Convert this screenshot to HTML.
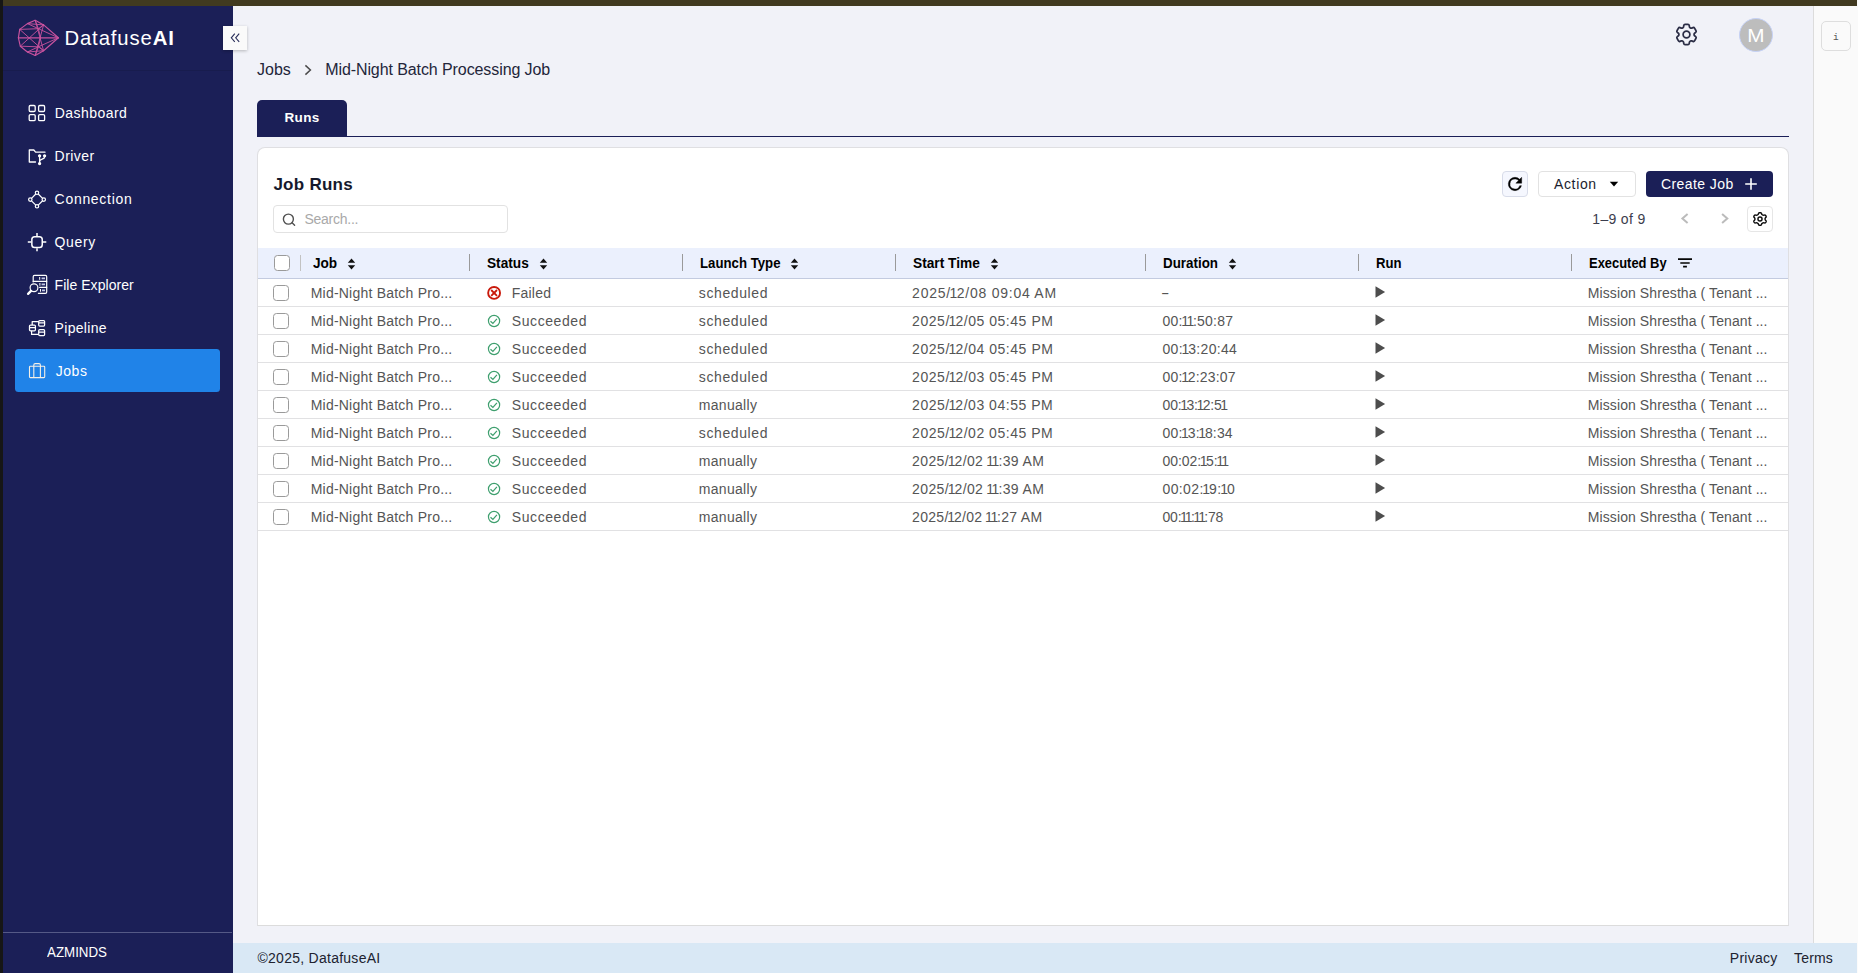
<!DOCTYPE html>
<html lang="en">
<head>
<meta charset="utf-8">
<title>DatafuseAI - Jobs</title>
<style>
*{box-sizing:border-box;margin:0;padding:0}
html,body{width:1858px;height:973px;overflow:hidden;background:#fbfbfb}
body{position:relative;font-family:"Liberation Sans",sans-serif;color:#1e2133;font-size:14px}
.abs{position:absolute}
#leftstrip{left:0;top:0;width:3px;height:973px;background:#161616}
#topstrip{left:3px;top:0;width:1854px;height:6px;background:#413a20}
#sidebar{left:3px;top:6px;width:230px;height:967px;background:#1b1f57;color:#fff}
#main{left:233px;top:6px;width:1580px;height:937px;background:#f1f2f8}
#rightpanel{left:1813px;top:6px;width:45px;height:937px;background:#fafafa;border-left:1px solid #dcdcdc}
#footer{left:233px;top:943px;width:1624px;height:30px;background:#d9e8f5}
.t{position:absolute;white-space:nowrap;line-height:1}
/* sidebar */
.nav{position:absolute;left:52px;font-size:14px;color:#fff;white-space:nowrap;line-height:18px}
.ico{position:absolute;left:24px;width:20px;height:20px}
/* table */
.hd{position:absolute;top:248px;height:31px;left:258px;width:1530px;background:#ebf0fd;border-bottom:1px solid #c3cbe0}
.hl{position:absolute;top:255px;font-weight:bold;font-size:14.5px;color:#000;line-height:16px;white-space:nowrap;transform-origin:0 50%}
.sep{position:absolute;top:254px;width:1px;height:17px;background:#9a9a9a}
.row{position:absolute;left:258px;width:1530px;height:28px;border-bottom:1px solid #e1e1e3}
.c{position:absolute;top:1px;height:27px;line-height:27px;font-size:14px;color:#555;white-space:nowrap}
.o{margin:0 -1.4px}
.cb{position:absolute;width:16px;height:16px;border:1px solid #9a9a9a;border-radius:3.5px;background:#fff}
</style>
</head>
<body>
<div id="leftstrip" class="abs"></div>
<div id="topstrip" class="abs"></div>
<div id="sidebar" class="abs"></div>
<div id="main" class="abs"></div>
<div id="rightpanel" class="abs"></div>
<div id="footer" class="abs"></div>
<!--SIDEBAR-->
<!-- logo -->
<svg class="abs" style="left:16px;top:18px" width="46" height="40" viewBox="16 18 46 40" fill="none" stroke="#c9529f" stroke-width="0.9" stroke-linejoin="round" stroke-linecap="round">
<path d="M35.2 20.3 L43.6 24.9 L58.4 37.8 L43.6 50.7 L35.2 55.5 L27.4 52 L20.3 46.2 L18.4 37.8 L19.7 29.4 L27.4 23.6 Z" stroke-width="1.150"/>
<path d="M18.4 37.8 H58.4" stroke-width="1.3"/>
<path d="M19.7 29.4 L43.6 50.7 M20.3 46.2 L43.6 24.9"/>
<path d="M35.2 20.3 L38.4 28.7 L40.6 37.8 L38.4 46.8 L35.2 55.5"/>
<path d="M58.4 37.8 L38.4 28.7 L27.4 23.6 M58.4 37.8 L38.4 46.8 L27.4 52"/>
<path d="M19.7 29.4 L38.4 28.7 L43.6 24.9 M20.3 46.2 L38.4 46.8 L43.6 50.7"/>
<path d="M35.2 20.3 L43.6 50.7 M35.2 55.5 L43.6 24.9"/>
<path d="M27.4 23.6 L43.6 24.9 M27.4 52 L43.6 50.7"/>
</svg>
<div class="t" id="logotxt" style="left:64.4px;top:26px;font-size:20.3px;line-height:24px;color:#fff;letter-spacing:0.9px">Datafuse<b>AI</b></div>
<div class="abs" style="left:3px;top:70px;width:229px;height:1px;background:#181c4e"></div>
<!-- collapse button -->
<div class="abs" style="left:223px;top:26px;width:24px;height:24px;background:#fafafa;box-shadow:0 1px 3px rgba(0,0,0,.25)"></div>
<svg class="abs" style="left:229px;top:32px" width="12" height="12" viewBox="0 0 12 12" fill="none" stroke="#2a2e5a" stroke-width="1.1"><path d="M5.8 1.7 L2.3 5.800 L5.8 9.900 M10.200 1.700 L6.700 5.800 L10.200 9.900"/></svg>
<!-- active item -->
<div class="abs" style="left:15px;top:349px;width:205px;height:43px;background:#2083e8;border-radius:3.5px"></div>
<!-- nav icons -->
<svg class="abs" style="left:27px;top:103px" width="20" height="20" viewBox="27 103 20 20" fill="none" stroke="#fff" stroke-width="1.3"><rect x="29.2" y="105.5" width="6" height="6" rx="1.2"/><rect x="38.6" y="105.5" width="6" height="6" rx="1.2"/><rect x="29.2" y="114.6" width="6" height="6" rx="1.2"/><rect x="38.6" y="114.6" width="6" height="6" rx="1.2"/></svg>
<svg class="abs" style="left:27px;top:147px" width="21" height="20" viewBox="27 147 21 20" fill="none" stroke="#fff" stroke-width="1.3" stroke-linejoin="round" stroke-linecap="round"><path d="M35.5 162 H29.3 V150 H33.8 L35.6 152.2 H45"/><circle cx="39.6" cy="155.8" r="1" fill="#fff"/><circle cx="44.6" cy="155.8" r="1" fill="#fff"/><circle cx="39.6" cy="163.6" r="1" fill="#fff"/><path d="M39.6 157 V162.4 M44.6 157 C44.6 159.8 40 158.6 39.6 161.4"/></svg>
<svg class="abs" style="left:27px;top:189px" width="20" height="21" viewBox="27 189 20 21" fill="none" stroke="#fff" stroke-width="1.2"><circle cx="37" cy="192.8" r="1.7"/><circle cx="37" cy="206.3" r="1.7"/><circle cx="30.3" cy="199.6" r="1.7"/><circle cx="43.8" cy="199.6" r="1.7"/><path d="M35.8 194 L31.5 198.4 M38.2 194 L42.6 198.4 M31.5 200.8 L35.8 205.1 M42.6 200.8 L38.2 205.1"/></svg>
<svg class="abs" style="left:26px;top:231px" width="22" height="22" viewBox="26 231 22 22" fill="none" stroke="#fff" stroke-width="1.5"><rect x="31.85" y="236.65" width="10.4" height="10.8" rx="2.800"/><path d="M37 233 V236 M37 248.200 V251.200 M27.800 242 H31.200 M43 242 H46.300"/></svg>
<svg class="abs" style="left:26px;top:273px" width="23" height="23" viewBox="26 273 23 23" fill="none" stroke="#fff" stroke-width="1.2" stroke-linecap="round" stroke-linejoin="round"><path d="M33.2 282 V276.700 Q33.2 275.4 34.500 275.4 H45.400 Q46.700 275.400 46.700 276.700 V292 Q46.700 293.300 45.400 293.300 H38.400"/><path d="M33.2 281.300 H46.700 M39.600 287.300 H46.700"/><path d="M39.700 277.400 V279.400 M39.900 283.400 V285.300 M40.500 289.400 V291.300" stroke-width="1"/><path d="M41.600 278.400 H45 M41.600 284.400 H45 M42 290.400 H45" stroke-width="1.900" stroke="#c4c8e6" stroke-linecap="butt"/><circle cx="34" cy="287.700" r="3.900"/><path d="M31 290.900 L28.100 293.900" stroke-width="2.300"/></svg>
<svg class="abs" style="left:27px;top:318px" width="20" height="20" viewBox="27 318 20 20" fill="none" stroke="#fff" stroke-width="1.250" stroke-linejoin="round"><rect x="29.500" y="325.100" width="5.900" height="5.700" rx="1"/><rect x="38.700" y="320.500" width="5.900" height="5.500" rx="1"/><rect x="38.700" y="329.700" width="5.900" height="5.900" rx="1"/><path d="M32.200 325.100 V321.600 H38.700 M31.600 330.800 V334.400 H38.700"/><path d="M29.500 327.600 H35.400 M38.700 322.900 H44.600 M38.700 332.100 H44.600"/></svg>
<svg class="abs" style="left:27px;top:361px" width="20" height="19" viewBox="27 361 20 19" fill="none" stroke="#f4efe6" stroke-width="1.1" stroke-linejoin="round"><rect x="29.5" y="366.2" width="15.2" height="11.4" rx="0.8"/><path d="M33.8 377.6 V365 Q33.8 363.6 35.2 363.6 H39 Q40.4 363.6 40.4 365 V377.6"/></svg>
<!-- nav labels -->
<div class="nav" id="n1" style="left:54.8px;top:104px;letter-spacing:0.45px">Dashboard</div>
<div class="nav" id="n2" style="left:54.6px;top:147px;letter-spacing:0.46px">Driver</div>
<div class="nav" id="n3" style="left:54.6px;top:190px;letter-spacing:0.7px">Connection</div>
<div class="nav" id="n4" style="left:54.6px;top:233px;letter-spacing:0.62px">Query</div>
<div class="nav" id="n5" style="left:54.6px;top:276px;letter-spacing:0.04px">File Explorer</div>
<div class="nav" id="n6" style="left:54.6px;top:319px;letter-spacing:0.31px">Pipeline</div>
<div class="nav" id="n7" style="left:55.7px;top:362px;letter-spacing:0.57px">Jobs</div>
<!-- sidebar footer -->
<div class="abs" style="left:3px;top:932px;width:229px;height:1px;background:#555986"></div>
<div class="t" id="azm" style="left:46.5px;top:943.4px;font-size:15.5px;line-height:18px;color:#fff;transform:scaleX(.86);transform-origin:0 50%">AZMINDS</div>

<!--HEADER-->
<!-- top right gear -->
<svg class="abs" style="left:1673.100px;top:21.200px" width="27" height="27" viewBox="0 0 24 24" fill="none" stroke="#2b2d45" stroke-width="1.550" stroke-linecap="round" stroke-linejoin="round"><path d="M9.594 3.94c.09-.542.56-.94 1.11-.94h2.593c.55 0 1.02.398 1.11.94l.213 1.281c.063.374.313.686.645.87.074.04.147.083.22.127.325.196.72.257 1.075.124l1.217-.456a1.125 1.125 0 0 1 1.37.49l1.296 2.247a1.125 1.125 0 0 1-.26 1.431l-1.003.827c-.293.241-.438.613-.43.992a7.723 7.723 0 0 1 0 .255c-.008.378.137.75.43.991l1.004.827c.424.35.534.955.26 1.43l-1.298 2.247a1.125 1.125 0 0 1-1.369.491l-1.217-.456c-.355-.133-.75-.072-1.076.124a6.470 6.470 0 0 1-.22.128c-.331.183-.581.495-.644.869l-.213 1.281c-.09.543-.56.94-1.11.94h-2.594c-.55 0-1.019-.398-1.11-.94l-.213-1.281c-.062-.374-.312-.686-.644-.87a6.520 6.520 0 0 1-.22-.127c-.325-.196-.72-.257-1.076-.124l-1.217.456a1.125 1.125 0 0 1-1.369-.49l-1.297-2.247a1.125 1.125 0 0 1 .26-1.431l1.004-.827c.292-.24.437-.613.43-.991a6.932 6.932 0 0 1 0-.255c.007-.38-.138-.751-.43-.992l-1.004-.827a1.125 1.125 0 0 1-.26-1.430l1.297-2.247a1.125 1.125 0 0 1 1.37-.491l1.216.456c.356.133.751.072 1.076-.124.072-.044.146-.086.22-.128.332-.183.582-.495.644-.869l.214-1.280Z"/><path d="M15 12a3 3 0 1 1-6 0 3 3 0 0 1 6 0Z"/></svg>
<!-- avatar -->
<div class="abs" style="left:1739px;top:18px;width:34px;height:34px;border-radius:50%;background:#bdbdbd;border:1px solid #c6d2f6"></div>
<div class="t" id="avM" style="left:1748.2px;top:23.5px;font-size:19px;line-height:24px;color:#fff;transform:scaleX(1.09);transform-origin:50% 50%">M</div>
<!-- right panel button -->
<div class="abs" style="left:1821px;top:21px;width:30px;height:30px;border:1px solid #dedede;border-radius:5px;background:#fafafa"></div>
<div class="t" style="left:1833px;top:31.8px;font-family:'Liberation Mono',monospace;font-size:9.5px;line-height:12px;color:#555">i</div>
<!-- breadcrumb -->
<div class="t" id="bc1" style="left:257.0px;top:60.4px;font-size:16px;line-height:20px;color:#23263a;letter-spacing:0.0px">Jobs</div>
<svg class="abs" style="left:302px;top:63px" width="12" height="14" viewBox="0 0 12 14" fill="none" stroke="#4a4a4a" stroke-width="1.5"><path d="M3.4 2.4 L8.4 7 L3.4 11.6"/></svg>
<div class="t" id="bc2" style="left:325.2px;top:60.4px;font-size:16px;line-height:20px;color:#23263a;letter-spacing:-0.09px">Mid-Night Batch Processing Job</div>
<!-- tab -->
<div class="abs" style="left:257px;top:100px;width:90px;height:37px;background:#1b1f57;border-radius:5px 5px 0 0"></div>
<div class="abs" style="left:257px;top:136px;width:1532px;height:1px;background:#1b1f57"></div>
<div class="t" id="tabtxt" style="left:284.5px;top:109px;font-size:13.5px;line-height:17px;font-weight:bold;color:#fff;letter-spacing:0.33px">Runs</div>

<!--CARD-->
<div class="abs" style="left:257px;top:147px;width:1532px;height:779px;background:#fff;border:1px solid #dfdfe2;border-radius:8px 8px 0 0;border-bottom-color:#dcdcdc"></div>
<div class="t" id="ttl" style="left:273.4px;top:173.7px;font-size:17px;line-height:21px;font-weight:bold;color:#16192c;letter-spacing:0.27px">Job Runs</div>
<!-- refresh -->
<div class="abs" style="left:1502px;top:171px;width:26px;height:26px;background:#f5f7fe;border:1px solid #d8dce9;border-radius:4px"></div>
<svg class="abs" style="left:1505.3px;top:174.2px" width="20" height="20" viewBox="0 0 24 24" fill="#000" stroke="#000" stroke-width="0.500"><path d="M17.65 6.35A7.96 7.96 0 0 0 12 4a8 8 0 1 0 7.73 10h-2.080A6 6 0 1 1 12 6c1.660 0 3.140.690 4.220 1.780L13 11h7V4z"/></svg>
<!-- action -->
<div class="abs" style="left:1538px;top:171px;width:98px;height:26px;background:#fff;border:1px solid #e2e2e2;border-radius:4px"></div>
<div class="t" id="act" style="left:1554.0px;top:175.1px;font-size:14px;line-height:18px;color:#1b1d2e;letter-spacing:0.64px">Action</div>
<svg class="abs" style="left:1609px;top:181px" width="10" height="6" viewBox="0 0 10 6" fill="#000"><path d="M0.800 0.800 H9.200 L5 5.400 Z"/></svg>
<!-- create job -->
<div class="abs" style="left:1646px;top:171px;width:127px;height:26px;background:#1b1f57;border-radius:4px"></div>
<div class="t" id="cj" style="left:1661.0px;top:175.1px;font-size:14px;line-height:18px;color:#fff;letter-spacing:0.41px">Create Job</div>
<svg class="abs" style="left:1744px;top:177px" width="14" height="14" viewBox="0 0 14 14" fill="none" stroke="#fff" stroke-width="1.6"><path d="M7 1.200 V12.800 M1.200 7 H12.800"/></svg>
<!-- search -->
<div class="abs" style="left:273px;top:205px;width:235px;height:28px;background:#fff;border:1px solid #e2e2e2;border-radius:4px"></div>
<svg class="abs" style="left:281px;top:212px" width="16" height="16" viewBox="0 0 16 16" fill="none" stroke="#505050" stroke-width="1.400" stroke-linecap="round"><circle cx="7.400" cy="7.100" r="5"/><path d="M11.100 10.800 L13.600 13.300"/></svg>
<div class="t" id="srch" style="left:304.4px;top:209.7px;font-size:14px;line-height:18px;color:#a9a9a9;letter-spacing:-0.25px">Search...</div>
<!-- pagination -->
<div class="t" id="pg" style="left:1592.3px;top:210.3px;font-size:14px;line-height:18px;color:#3b3d4d;letter-spacing:0.33px">1–9 of 9</div>
<svg class="abs" style="left:1679px;top:212px" width="12" height="14" viewBox="0 0 12 14" fill="none" stroke="#bbbbbb" stroke-width="2"><path d="M8.600 1.900 L3.400 6.400 L8.600 10.900"/></svg>
<svg class="abs" style="left:1719px;top:212px" width="12" height="14" viewBox="0 0 12 14" fill="none" stroke="#bbbbbb" stroke-width="2"><path d="M3.100 1.900 L8.300 6.400 L3.100 10.900"/></svg>
<div class="abs" style="left:1747px;top:206px;width:26px;height:26px;background:#fff;border:1px solid #e6e6e6;border-radius:4px"></div>
<svg class="abs" style="left:1752px;top:211px" width="16" height="16" viewBox="-8 -8 16 16" fill="none" stroke="#0c0c0c" stroke-width="1.400" stroke-linejoin="round"><path d="M0.00 -6.35 L0.44 -6.32 L0.88 -6.22 L1.26 -5.94 L1.54 -5.36 L1.74 -4.78 L1.98 -4.46 L2.25 -4.27 L2.54 -4.11 L2.83 -3.96 L3.14 -3.83 L3.56 -3.79 L4.20 -3.92 L4.87 -3.99 L5.32 -3.82 L5.64 -3.52 L5.88 -3.18 L6.08 -2.80 L6.20 -2.40 L6.13 -1.95 L5.74 -1.44 L5.29 -0.98 L5.12 -0.63 L5.09 -0.31 L5.08 -0.00 L5.09 0.31 L5.12 0.63 L5.29 0.98 L5.74 1.44 L6.13 1.95 L6.20 2.40 L6.08 2.80 L5.88 3.17 L5.64 3.52 L5.32 3.82 L4.87 3.99 L4.20 3.92 L3.56 3.79 L3.14 3.83 L2.83 3.96 L2.54 4.11 L2.25 4.27 L1.98 4.46 L1.74 4.78 L1.54 5.36 L1.26 5.94 L0.88 6.22 L0.44 6.32 L0.00 6.35 L-0.44 6.32 L-0.88 6.22 L-1.26 5.94 L-1.54 5.36 L-1.74 4.78 L-1.98 4.46 L-2.25 4.27 L-2.54 4.11 L-2.83 3.96 L-3.14 3.83 L-3.56 3.79 L-4.20 3.92 L-4.87 3.99 L-5.32 3.82 L-5.64 3.52 L-5.88 3.18 L-6.08 2.80 L-6.20 2.40 L-6.13 1.95 L-5.74 1.44 L-5.29 0.98 L-5.12 0.63 L-5.09 0.31 L-5.08 0.00 L-5.09 -0.31 L-5.12 -0.63 L-5.29 -0.98 L-5.74 -1.44 L-6.13 -1.95 L-6.20 -2.40 L-6.08 -2.80 L-5.88 -3.18 L-5.64 -3.52 L-5.32 -3.82 L-4.87 -3.99 L-4.20 -3.92 L-3.56 -3.79 L-3.14 -3.83 L-2.83 -3.96 L-2.54 -4.11 L-2.25 -4.27 L-1.98 -4.46 L-1.74 -4.78 L-1.54 -5.36 L-1.26 -5.94 L-0.88 -6.22 L-0.44 -6.32 Z"/><circle cx="0" cy="0" r="2.050"/></svg>

<!--TABLE-->
<div class="hd"></div>
<div class="cb" style="left:274px;top:255px"></div>
<div class="sep" style="left:300px;top:255px;height:16px;background:#c2c2c2"></div>
<div class="sep" style="left:469px"></div>
<div class="sep" style="left:682px"></div>
<div class="sep" style="left:895px"></div>
<div class="sep" style="left:1145px"></div>
<div class="sep" style="left:1358px"></div>
<div class="sep" style="left:1571px"></div>
<div class="hl" id="hJob" style="left:313.0px;transform:scaleX(0.938)">Job</div>
<svg class="abs" style="left:347.3px;top:258px" width="9" height="12" viewBox="0 0 9 12" fill="#111"><path d="M4.500 0.600 L8.200 4.800 H0.800 Z M4.500 11.400 L8.200 7.200 H0.800 Z"/></svg>
<div class="hl" id="hSt" style="left:487.2px;transform:scaleX(0.942)">Status</div>
<svg class="abs" style="left:538.8px;top:258px" width="9" height="12" viewBox="0 0 9 12" fill="#111"><path d="M4.500 0.600 L8.200 4.800 H0.800 Z M4.500 11.400 L8.200 7.200 H0.800 Z"/></svg>
<div class="hl" id="hLt" style="left:699.7px;transform:scaleX(0.911)">Launch Type</div>
<svg class="abs" style="left:790.3px;top:258px" width="9" height="12" viewBox="0 0 9 12" fill="#111"><path d="M4.500 0.600 L8.200 4.800 H0.800 Z M4.500 11.400 L8.200 7.200 H0.800 Z"/></svg>
<div class="hl" id="hSt2" style="left:913.4px;transform:scaleX(0.945)">Start Time</div>
<svg class="abs" style="left:989.8px;top:258px" width="9" height="12" viewBox="0 0 9 12" fill="#111"><path d="M4.500 0.600 L8.200 4.800 H0.800 Z M4.500 11.400 L8.200 7.200 H0.800 Z"/></svg>
<div class="hl" id="hDu" style="left:1162.5px;transform:scaleX(0.922)">Duration</div>
<svg class="abs" style="left:1227.8px;top:258px" width="9" height="12" viewBox="0 0 9 12" fill="#111"><path d="M4.500 0.600 L8.200 4.800 H0.800 Z M4.500 11.400 L8.200 7.200 H0.800 Z"/></svg>
<div class="hl" id="hRun" style="left:1375.5px;transform:scaleX(0.906)">Run</div>
<div class="hl" id="hEx" style="left:1589.1px;transform:scaleX(0.892)">Executed By</div>
<svg class="abs" style="left:1677px;top:257px" width="16" height="12" viewBox="0 0 16 12" fill="none" stroke="#050505" stroke-width="1.700"><path d="M1 2.100 H15 M3.300 6 H12.700 M6.100 9.700 H9.900"/></svg>
<div class="row" style="top:279px"><div class="cb" style="left:15px;top:6px"></div><div class="c cjob" style="left:52.7px;letter-spacing:0.22px">Mid-Night Batch Pro...</div><svg class="abs" style="left:228px;top:6px" width="16" height="16" viewBox="0 0 16 16" fill="none" stroke="#c9190b" stroke-width="1.900"><circle cx="8.100" cy="7.900" r="5.950"/><path d="M5.200 5 L11 10.800 M11 5 L5.200 10.800" stroke-width="1.800"/></svg><div class="c cst" style="left:253.8px;letter-spacing:0.2px">Failed</div><div class="c clt" style="left:440.8px;letter-spacing:0.6px">scheduled</div><div class="c cdt" style="left:654.1px;letter-spacing:0.76px">2025/<span class="o">1</span>2/08 09:04 AM</div><div class="c cdu" style="left:903.4px;transform:scaleX(1.8);transform-origin:0 50%">-</div><svg class="abs" style="left:1117px;top:7px" width="11" height="13" viewBox="0 0 11 13" fill="#4d4d4d"><path d="M0.500 0.200 L10.100 6 L0.500 11.800 Z"/></svg><div class="c cex" style="left:1329.8px;letter-spacing:0.09px">Mission Shrestha ( Tenant ...</div></div>
<div class="row" style="top:307px"><div class="cb" style="left:15px;top:6px"></div><div class="c cjob" style="left:52.7px;letter-spacing:0.22px">Mid-Night Batch Pro...</div><svg class="abs" style="left:228px;top:6px" width="16" height="16" viewBox="0 0 16 16" fill="none" stroke="#3e9f6e" stroke-width="1.200"><circle cx="8.050" cy="8" r="5.600"/><path d="M4.500 8.300 L6.900 10.500 L10.900 5.900" stroke-width="1.200"/></svg><div class="c cst" style="left:253.8px;letter-spacing:0.58px">Succeeded</div><div class="c clt" style="left:440.8px;letter-spacing:0.6px">scheduled</div><div class="c cdt" style="left:654.1px;letter-spacing:0.54px">2025/<span class="o">1</span>2/05 05:45 PM</div><div class="c cdu" style="left:904.5px;letter-spacing:0.2px">00:<span class="o">1</span><span class="o">1</span>:50:87</div><svg class="abs" style="left:1117px;top:7px" width="11" height="13" viewBox="0 0 11 13" fill="#4d4d4d"><path d="M0.500 0.200 L10.100 6 L0.500 11.800 Z"/></svg><div class="c cex" style="left:1329.8px;letter-spacing:0.09px">Mission Shrestha ( Tenant ...</div></div>
<div class="row" style="top:335px"><div class="cb" style="left:15px;top:6px"></div><div class="c cjob" style="left:52.7px;letter-spacing:0.22px">Mid-Night Batch Pro...</div><svg class="abs" style="left:228px;top:6px" width="16" height="16" viewBox="0 0 16 16" fill="none" stroke="#3e9f6e" stroke-width="1.200"><circle cx="8.050" cy="8" r="5.600"/><path d="M4.500 8.300 L6.900 10.500 L10.900 5.900" stroke-width="1.200"/></svg><div class="c cst" style="left:253.8px;letter-spacing:0.58px">Succeeded</div><div class="c clt" style="left:440.8px;letter-spacing:0.6px">scheduled</div><div class="c cdt" style="left:654.1px;letter-spacing:0.54px">2025/<span class="o">1</span>2/04 05:45 PM</div><div class="c cdu" style="left:904.5px;letter-spacing:0.32px">00:<span class="o">1</span>3:20:44</div><svg class="abs" style="left:1117px;top:7px" width="11" height="13" viewBox="0 0 11 13" fill="#4d4d4d"><path d="M0.500 0.200 L10.100 6 L0.500 11.800 Z"/></svg><div class="c cex" style="left:1329.8px;letter-spacing:0.09px">Mission Shrestha ( Tenant ...</div></div>
<div class="row" style="top:363px"><div class="cb" style="left:15px;top:6px"></div><div class="c cjob" style="left:52.7px;letter-spacing:0.22px">Mid-Night Batch Pro...</div><svg class="abs" style="left:228px;top:6px" width="16" height="16" viewBox="0 0 16 16" fill="none" stroke="#3e9f6e" stroke-width="1.200"><circle cx="8.050" cy="8" r="5.600"/><path d="M4.500 8.300 L6.900 10.500 L10.900 5.900" stroke-width="1.200"/></svg><div class="c cst" style="left:253.8px;letter-spacing:0.58px">Succeeded</div><div class="c clt" style="left:440.8px;letter-spacing:0.6px">scheduled</div><div class="c cdt" style="left:654.1px;letter-spacing:0.54px">2025/<span class="o">1</span>2/03 05:45 PM</div><div class="c cdu" style="left:904.5px;letter-spacing:0.18px">00:<span class="o">1</span>2:23:07</div><svg class="abs" style="left:1117px;top:7px" width="11" height="13" viewBox="0 0 11 13" fill="#4d4d4d"><path d="M0.500 0.200 L10.100 6 L0.500 11.800 Z"/></svg><div class="c cex" style="left:1329.8px;letter-spacing:0.09px">Mission Shrestha ( Tenant ...</div></div>
<div class="row" style="top:391px"><div class="cb" style="left:15px;top:6px"></div><div class="c cjob" style="left:52.7px;letter-spacing:0.22px">Mid-Night Batch Pro...</div><svg class="abs" style="left:228px;top:6px" width="16" height="16" viewBox="0 0 16 16" fill="none" stroke="#3e9f6e" stroke-width="1.200"><circle cx="8.050" cy="8" r="5.600"/><path d="M4.500 8.300 L6.900 10.500 L10.900 5.900" stroke-width="1.200"/></svg><div class="c cst" style="left:253.8px;letter-spacing:0.58px">Succeeded</div><div class="c clt" style="left:440.8px;letter-spacing:0.3px">manually</div><div class="c cdt" style="left:654.1px;letter-spacing:0.53px">2025/<span class="o">1</span>2/03 04:55 PM</div><div class="c cdu" style="left:904.5px;letter-spacing:-0.14px">00:<span class="o">1</span>3:<span class="o">1</span>2:5<span class="o">1</span></div><svg class="abs" style="left:1117px;top:7px" width="11" height="13" viewBox="0 0 11 13" fill="#4d4d4d"><path d="M0.500 0.200 L10.100 6 L0.500 11.800 Z"/></svg><div class="c cex" style="left:1329.8px;letter-spacing:0.09px">Mission Shrestha ( Tenant ...</div></div>
<div class="row" style="top:419px"><div class="cb" style="left:15px;top:6px"></div><div class="c cjob" style="left:52.7px;letter-spacing:0.22px">Mid-Night Batch Pro...</div><svg class="abs" style="left:228px;top:6px" width="16" height="16" viewBox="0 0 16 16" fill="none" stroke="#3e9f6e" stroke-width="1.200"><circle cx="8.050" cy="8" r="5.600"/><path d="M4.500 8.300 L6.900 10.500 L10.900 5.900" stroke-width="1.200"/></svg><div class="c cst" style="left:253.8px;letter-spacing:0.58px">Succeeded</div><div class="c clt" style="left:440.8px;letter-spacing:0.6px">scheduled</div><div class="c cdt" style="left:654.1px;letter-spacing:0.53px">2025/<span class="o">1</span>2/02 05:45 PM</div><div class="c cdu" style="left:904.5px;letter-spacing:0.17px">00:<span class="o">1</span>3:<span class="o">1</span>8:34</div><svg class="abs" style="left:1117px;top:7px" width="11" height="13" viewBox="0 0 11 13" fill="#4d4d4d"><path d="M0.500 0.200 L10.100 6 L0.500 11.800 Z"/></svg><div class="c cex" style="left:1329.8px;letter-spacing:0.09px">Mission Shrestha ( Tenant ...</div></div>
<div class="row" style="top:447px"><div class="cb" style="left:15px;top:6px"></div><div class="c cjob" style="left:52.7px;letter-spacing:0.22px">Mid-Night Batch Pro...</div><svg class="abs" style="left:228px;top:6px" width="16" height="16" viewBox="0 0 16 16" fill="none" stroke="#3e9f6e" stroke-width="1.200"><circle cx="8.050" cy="8" r="5.600"/><path d="M4.500 8.300 L6.900 10.500 L10.900 5.900" stroke-width="1.200"/></svg><div class="c cst" style="left:253.8px;letter-spacing:0.58px">Succeeded</div><div class="c clt" style="left:440.8px;letter-spacing:0.3px">manually</div><div class="c cdt" style="left:654.1px;letter-spacing:0.39px">2025/<span class="o">1</span>2/02 <span class="o">1</span><span class="o">1</span>:39 AM</div><div class="c cdu" style="left:904.5px;letter-spacing:-0.05px">00:02:<span class="o">1</span>5:<span class="o">1</span><span class="o">1</span></div><svg class="abs" style="left:1117px;top:7px" width="11" height="13" viewBox="0 0 11 13" fill="#4d4d4d"><path d="M0.500 0.200 L10.100 6 L0.500 11.800 Z"/></svg><div class="c cex" style="left:1329.8px;letter-spacing:0.09px">Mission Shrestha ( Tenant ...</div></div>
<div class="row" style="top:475px"><div class="cb" style="left:15px;top:6px"></div><div class="c cjob" style="left:52.7px;letter-spacing:0.22px">Mid-Night Batch Pro...</div><svg class="abs" style="left:228px;top:6px" width="16" height="16" viewBox="0 0 16 16" fill="none" stroke="#3e9f6e" stroke-width="1.200"><circle cx="8.050" cy="8" r="5.600"/><path d="M4.500 8.300 L6.900 10.500 L10.900 5.900" stroke-width="1.200"/></svg><div class="c cst" style="left:253.8px;letter-spacing:0.58px">Succeeded</div><div class="c clt" style="left:440.8px;letter-spacing:0.3px">manually</div><div class="c cdt" style="left:654.1px;letter-spacing:0.39px">2025/<span class="o">1</span>2/02 <span class="o">1</span><span class="o">1</span>:39 AM</div><div class="c cdu" style="left:904.5px;letter-spacing:0.38px">00:02:<span class="o">1</span>9:<span class="o">1</span>0</div><svg class="abs" style="left:1117px;top:7px" width="11" height="13" viewBox="0 0 11 13" fill="#4d4d4d"><path d="M0.500 0.200 L10.100 6 L0.500 11.800 Z"/></svg><div class="c cex" style="left:1329.8px;letter-spacing:0.09px">Mission Shrestha ( Tenant ...</div></div>
<div class="row" style="top:503px"><div class="cb" style="left:15px;top:6px"></div><div class="c cjob" style="left:52.7px;letter-spacing:0.22px">Mid-Night Batch Pro...</div><svg class="abs" style="left:228px;top:6px" width="16" height="16" viewBox="0 0 16 16" fill="none" stroke="#3e9f6e" stroke-width="1.200"><circle cx="8.050" cy="8" r="5.600"/><path d="M4.500 8.300 L6.900 10.500 L10.900 5.900" stroke-width="1.200"/></svg><div class="c cst" style="left:253.8px;letter-spacing:0.58px">Succeeded</div><div class="c clt" style="left:440.8px;letter-spacing:0.3px">manually</div><div class="c cdt" style="left:654.1px;letter-spacing:0.29px">2025/<span class="o">1</span>2/02 <span class="o">1</span><span class="o">1</span>:27 AM</div><div class="c cdu" style="left:904.5px;letter-spacing:-0.2px">00:<span class="o">1</span><span class="o">1</span>:<span class="o">1</span><span class="o">1</span>:78</div><svg class="abs" style="left:1117px;top:7px" width="11" height="13" viewBox="0 0 11 13" fill="#4d4d4d"><path d="M0.500 0.200 L10.100 6 L0.500 11.800 Z"/></svg><div class="c cex" style="left:1329.8px;letter-spacing:0.09px">Mission Shrestha ( Tenant ...</div></div>

<!--FOOTER-->
<div class="t" id="cp" style="left:257.5px;top:949.4px;font-size:14px;line-height:18px;color:#20222f;letter-spacing:0.26px">©2025, DatafuseAI</div>
<div class="t" id="pv" style="left:1729.8px;top:949.4px;font-size:14px;line-height:18px;color:#20222f;letter-spacing:0.28px">Privacy</div>
<div class="t" id="tm" style="left:1794.1px;top:949.4px;font-size:14px;line-height:18px;color:#20222f;letter-spacing:0.15px">Terms</div>

</body>
</html>
